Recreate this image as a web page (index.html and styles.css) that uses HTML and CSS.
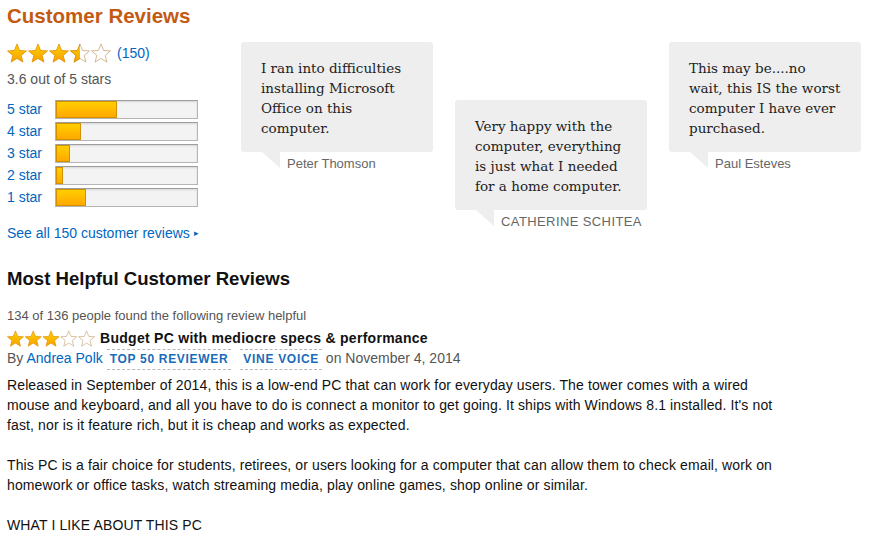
FILE: index.html
```html
<!DOCTYPE html>
<html>
<head>
<meta charset="utf-8">
<link rel="stylesheet" href="styles.css">
</head>
<body>
<svg width="0" height="0" class="defs">
  <defs>
    <linearGradient id="gold" x1="0" y1="0" x2="0" y2="1">
      <stop offset="0" stop-color="#ffd200"/>
      <stop offset="1" stop-color="#f7a000"/>
    </linearGradient>
    <path id="star" d="M10 1 L12.6 7.5 L19.5 7.9 L14.2 12.4 L15.9 19.1 L10 15.4 L4.1 19.1 L5.8 12.4 L0.5 7.9 L7.4 7.5 Z"/>
    <clipPath id="half"><rect x="0" y="0" width="10" height="20"/></clipPath>
  </defs>
</svg>
<div class="page">
  <section class="summary">
    <h2 class="title">Customer Reviews</h2>
    <div class="summary-row">
      <div class="overview">
        <div class="avg">
          <svg class="stars-lg" viewBox="0 0 104 20" width="104" height="20">
            <use href="#star" x="0" class="on"/>
            <use href="#star" x="21" class="on"/>
            <use href="#star" x="42" class="on"/>
            <use href="#star" x="63" class="off"/>
            <g transform="translate(63 0)"><use href="#star" clip-path="url(#half)" class="on"/></g>
            <use href="#star" x="84" class="off"/>
          </svg>
          <a class="link count">(150)</a>
        </div>
        <div class="avg-text">3.6 out of 5 stars</div>
        <div class="hist">
          <div class="hist-row"><a class="link hist-label">5 star</a><div class="bar"><div class="fill" style="width:43%"></div></div></div>
          <div class="hist-row"><a class="link hist-label">4 star</a><div class="bar"><div class="fill" style="width:18%"></div></div></div>
          <div class="hist-row"><a class="link hist-label">3 star</a><div class="bar"><div class="fill" style="width:10%"></div></div></div>
          <div class="hist-row"><a class="link hist-label">2 star</a><div class="bar"><div class="fill" style="width:5%"></div></div></div>
          <div class="hist-row"><a class="link hist-label">1 star</a><div class="bar"><div class="fill" style="width:21%"></div></div></div>
        </div>
        <a class="link see-all">See all 150 customer reviews <span class="caret">&#9656;</span></a>
      </div>
      <div class="quotes">
        <figure class="quote">
          <blockquote class="bubble">I ran into difficulties installing Microsoft Office on this computer.</blockquote>
          <figcaption class="author">Peter Thomson</figcaption>
        </figure>
        <figure class="quote quote-low">
          <blockquote class="bubble">Very happy with the computer, everything is just what I needed for a home computer.</blockquote>
          <figcaption class="author">CATHERINE SCHITEA</figcaption>
        </figure>
        <figure class="quote">
          <blockquote class="bubble">This may be....no wait, this IS the worst computer I have ever purchased.</blockquote>
          <figcaption class="author">Paul Esteves</figcaption>
        </figure>
      </div>
    </div>
  </section>

  <section class="helpful">
    <h2 class="helpful-title">Most Helpful Customer Reviews</h2>
    <div class="votes">134 of 136 people found the following review helpful</div>
    <div class="review-head">
      <svg class="stars-sm" viewBox="0 0 104 20" width="88" height="17">
        <use href="#star" x="0" class="on"/>
        <use href="#star" x="21" class="on"/>
        <use href="#star" x="42" class="on"/>
        <use href="#star" x="63" class="off"/>
        <use href="#star" x="84" class="off"/>
      </svg>
      <span class="review-title">Budget PC with mediocre specs &amp; performance</span>
    </div>
    <div class="byline">By <a class="link">Andrea Polk</a> <span class="badge">TOP 50 REVIEWER</span> <span class="badge badge-vine">VINE VOICE</span> on November 4, 2014</div>
    <div class="review-body">
      <p>Released in September of 2014, this is a low-end PC that can work for everyday users. The tower comes with a wired mouse and keyboard, and all you have to do is connect a monitor to get going. It ships with Windows 8.1 installed. It's not fast, nor is it feature rich, but it is cheap and works as expected.</p>
      <p>This PC is a fair choice for students, retirees, or users looking for a computer that can allow them to check email, work on homework or office tasks, watch streaming media, play online games, shop online or similar.</p>
      <p>WHAT I LIKE ABOUT THIS PC</p>
    </div>
  </section>
</div>
</body>
</html>
```

FILE: styles.css
```css
html, body {
  margin: 0;
  padding: 0;
  background: #fff;
}
body {
  font-family: "Liberation Sans", Arial, sans-serif;
  color: #111;
  font-size: 14px;
}
.defs {
  position: absolute;
  width: 0;
  height: 0;
}
.page {
  padding: 5px 7px 0 7px;
}
.link {
  color: #0066c0;
  text-decoration: none;
}
.title {
  margin: 0;
  font-size: 20.5px;
  line-height: 22px;
  font-weight: bold;
  color: #c45a12;
}
.summary-row {
  display: flex;
  margin-top: 15px;
}
.overview {
  width: 234px;
  flex: none;
}
.avg {
  display: flex;
  align-items: center;
  height: 22px;
}
.stars-lg {
  display: block;
}
.on {
  fill: url(#gold);
  stroke: #e08e00;
  stroke-width: 0.8;
}
.off {
  fill: #fff;
  stroke: #c9a77a;
  stroke-width: 0.8;
}
.count {
  margin-left: 6px;
  font-size: 14px;
}
.avg-text {
  margin-top: 6px;
  line-height: 18px;
  color: #555;
  font-size: 14px;
}
.hist {
  margin-top: 10px;
}
.hist-row {
  display: flex;
  align-items: center;
  height: 22px;
}
.hist-label {
  width: 48px;
  font-size: 14px;
}
.bar {
  width: 141px;
  height: 17px;
  border: 1px solid #b5b5b5;
  border-top-color: #9d9d9d;
  background: #f3f3f3;
  box-shadow: inset 0 1px 2px rgba(0, 0, 0, 0.12);
  display: flex;
}
.fill {
  box-sizing: border-box;
  height: 100%;
  background: linear-gradient(#ffcf00, #ffa800);
  border: 1px solid #d29100;
}
.see-all {
  display: block;
  margin-top: 16px;
  line-height: 18px;
}
.caret {
  font-size: 9px;
  vertical-align: 2px;
}
.quotes {
  display: flex;
  gap: 22px;
  align-items: flex-start;
}
.quote {
  margin: 0;
  width: 192px;
}
.quote-low {
  margin-top: 58px;
}
.bubble {
  margin: 0;
  background: #eeeeee;
  border-radius: 3px;
  padding: 16px 18px 14px 20px;
  font-family: "DejaVu Serif", Georgia, serif;
  font-size: 13.5px;
  line-height: 20px;
  color: #222;
  position: relative;
}
.bubble::after {
  content: "";
  position: absolute;
  left: 21px;
  top: 100%;
  border-style: solid;
  border-width: 0 18px 16px 0;
  border-color: transparent #eeeeee transparent transparent;
}
.author {
  margin: 0;
  padding-left: 46px;
  line-height: 24px;
  font-size: 13px;
  color: #666;
}
.quote-low .author {
  letter-spacing: 0.4px;
}
.helpful {
  margin-top: 26px;
}
.helpful-title {
  margin: 0;
  font-size: 18.6px;
  line-height: 22px;
  font-weight: bold;
  color: #111;
}
.votes {
  margin-top: 18px;
  font-size: 13px;
  line-height: 16px;
  color: #555;
}
.review-head {
  margin-top: 4px;
  height: 20px;
  display: flex;
  align-items: center;
}
.stars-sm {
  display: block;
  margin-right: 5px;
}
.review-title {
  font-weight: bold;
  font-size: 14px;
  letter-spacing: 0.28px;
  color: #111;
}
.byline {
  line-height: 20px;
  color: #555;
  font-size: 14px;
}
.badge {
  font-size: 12px;
  font-weight: bold;
  letter-spacing: 0.7px;
  color: #1a6bb8;
  border-top: 1px dashed #b8b8b8;
  border-bottom: 1px dashed #b8b8b8;
  padding: 2px 3px 3px 3px;
}
.badge-vine {
  margin-left: 5px;
}
.review-body {
  margin-top: 6px;
  width: 785px;
  color: #111;
  font-size: 14px;
  line-height: 20px;
  letter-spacing: 0.12px;
}
.review-body p {
  margin: 0 0 20px 0;
}
```
